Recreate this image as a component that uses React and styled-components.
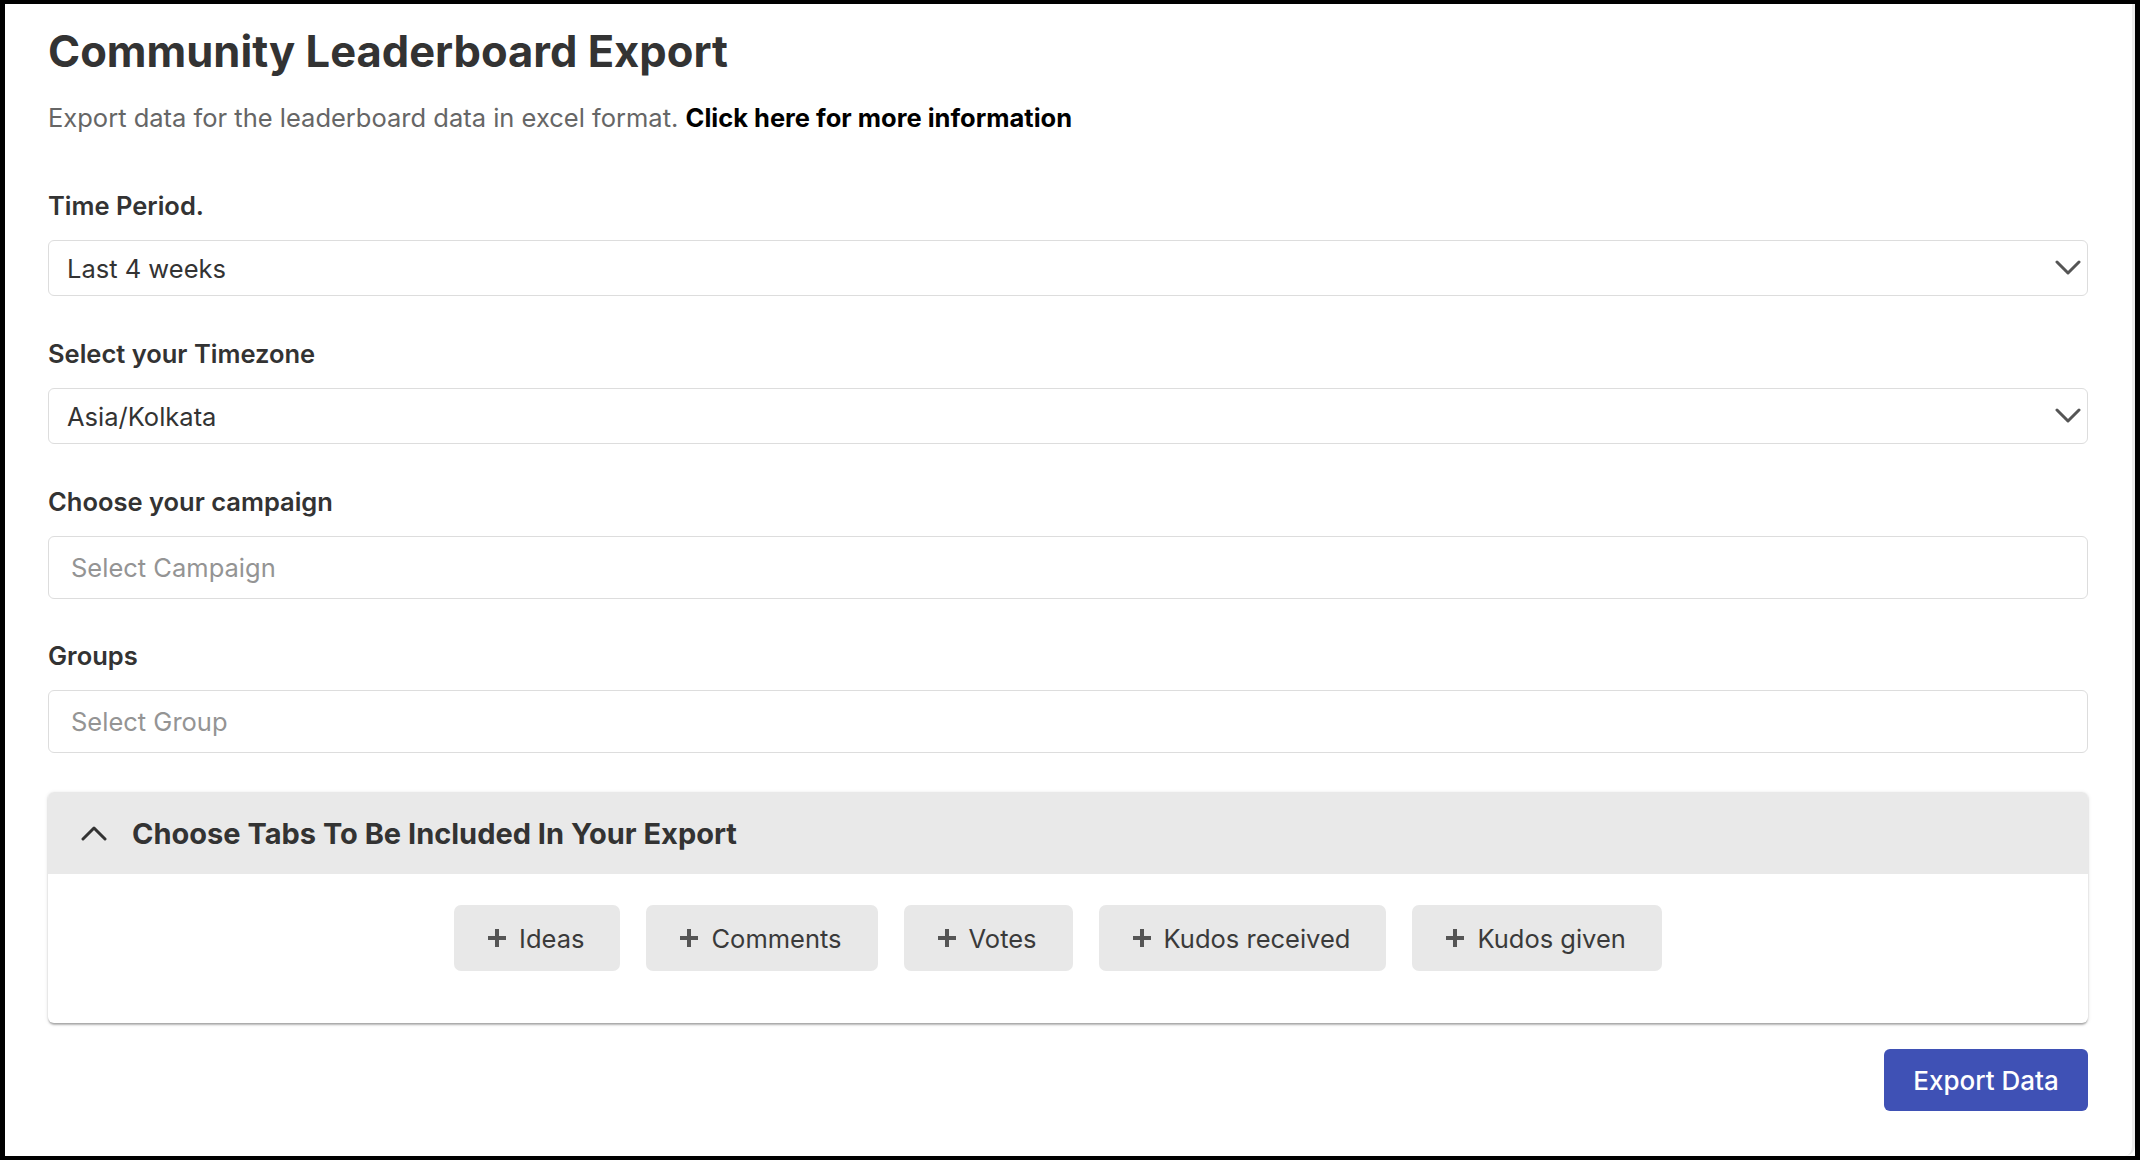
import React from "react";
import styled, { createGlobalStyle } from "styled-components";

const GlobalStyle = createGlobalStyle`
  html, body {
    margin: 0;
    padding: 0;
    background: #ffffff;
  }
  body {
    font-family: Inter, "Noto Sans", "Liberation Sans", sans-serif;
    color: #333333;
  }
  * {
    box-sizing: border-box;
  }
`;

const Frame = styled.div`
  width: 2140px;
  height: 1160px;
  border: 5px solid #000000;
  border-top-width: 4px;
  border-bottom-width: 4px;
  background: #ffffff;
  overflow: hidden;
`;

const Page = styled.div`
  height: 100%;
  border-right: 3px solid #ececec;
  border-radius: 0 0 10px 10px;
  padding: 20px 44px 0 43px;
  display: flex;
  flex-direction: column;
`;

const Title = styled.h1`
  margin: 0;
  font-size: 43.5px;
  line-height: 54px;
  font-weight: 700;
  color: #333333;
`;

const Intro = styled.p`
  margin: 22px 0 0;
  font-size: 25.5px;
  line-height: 36px;
  color: #666666;
`;

const InfoLink = styled.a`
  font-weight: 700;
  color: #000000;
  text-decoration: none;
  cursor: pointer;
`;

const Field = styled.div`
  display: flex;
  flex-direction: column;
  gap: 16px;
  margin-top: ${(props) => props.top || 40}px;
`;

const Label = styled.label`
  font-size: 25.5px;
  line-height: 36px;
  font-weight: 600;
  color: #333333;
`;

const SelectBox = styled.div`
  height: 56px;
  border: 1px solid #dddddd;
  border-radius: 6px;
  padding: 0 6px 0 18px;
  display: flex;
  align-items: center;
  justify-content: space-between;
  font-size: 25.5px;
  color: #333333;
  background: #ffffff;
`;

const InputBox = styled.div`
  height: 63px;
  border: 1px solid #dddddd;
  border-radius: 6px;
  padding: 0 22px;
  display: flex;
  align-items: center;
  font-size: 25.5px;
  color: #949494;
  background: #ffffff;
`;

const Card = styled.section`
  margin-top: 39px;
  border-radius: 6px;
  overflow: hidden;
  background: #ffffff;
  box-shadow: 0 3px 2px -1px rgba(0, 0, 0, 0.2), 0 1px 2px rgba(0, 0, 0, 0.14),
    0 1px 4px rgba(0, 0, 0, 0.12);
`;

const CardHeader = styled.div`
  height: 82px;
  background: #e9e9e9;
  display: flex;
  align-items: center;
  gap: 25px;
  padding: 0 0 0 33px;
  font-size: 29px;
  font-weight: 700;
  color: #333333;
`;

const CardBody = styled.div`
  padding: 31px 20px 52px 0;
  display: flex;
  justify-content: center;
  gap: 26px;
`;

const Chip = styled.button`
  height: 66px;
  border: none;
  border-radius: 7px;
  background: #e8e8e8;
  padding: 0 36px 0 34px;
  display: flex;
  align-items: center;
  gap: 13px;
  font-family: inherit;
  font-size: 25.5px;
  color: #3a3a3a;
  cursor: pointer;
`;

const Footer = styled.div`
  display: flex;
  justify-content: flex-end;
  margin-top: 26px;
`;

const ExportButton = styled.button`
  width: 204px;
  height: 62px;
  border: none;
  border-radius: 6px;
  background: #3f51b5;
  color: #ffffff;
  font-family: inherit;
  font-size: 26px;
  font-weight: 500;
  cursor: pointer;
`;

const Chevron = ({ up }) => (
  <svg width="26" height="16" viewBox="0 0 26 16" fill="none">
    <polyline
      points={up ? "2,14 13,3 24,14" : "2,2 13,13 24,2"}
      stroke={up ? "#333333" : "#555555"}
      strokeWidth="3"
      strokeLinecap="round"
      strokeLinejoin="round"
    />
  </svg>
);

const Plus = () => (
  <svg width="18" height="18" viewBox="0 0 18 18">
    <rect x="7" y="0" width="4" height="18" fill="#555555" />
    <rect x="0" y="7" width="18" height="4" fill="#555555" />
  </svg>
);

const tabs = ["Ideas", "Comments", "Votes", "Kudos received", "Kudos given"];

export default function App() {
  return (
    <>
      <GlobalStyle />
      <Frame>
        <Page>
          <Title>Community Leaderboard Export</Title>
          <Intro>
            Export data for the leaderboard data in excel format.{" "}
            <InfoLink>Click here for more information</InfoLink>
          </Intro>

          <Field top={52}>
            <Label>Time Period.</Label>
            <SelectBox>
              <span>Last 4 weeks</span>
              <Chevron />
            </SelectBox>
          </Field>

          <Field>
            <Label>Select your Timezone</Label>
            <SelectBox>
              <span>Asia/Kolkata</span>
              <Chevron />
            </SelectBox>
          </Field>

          <Field>
            <Label>Choose your campaign</Label>
            <InputBox>Select Campaign</InputBox>
          </Field>

          <Field top={39}>
            <Label>Groups</Label>
            <InputBox>Select Group</InputBox>
          </Field>

          <Card>
            <CardHeader>
              <Chevron up />
              <span>Choose Tabs To Be Included In Your Export</span>
            </CardHeader>
            <CardBody>
              {tabs.map((tab) => (
                <Chip key={tab}>
                  <Plus />
                  {tab}
                </Chip>
              ))}
            </CardBody>
          </Card>

          <Footer>
            <ExportButton>Export Data</ExportButton>
          </Footer>
        </Page>
      </Frame>
    </>
  );
}
